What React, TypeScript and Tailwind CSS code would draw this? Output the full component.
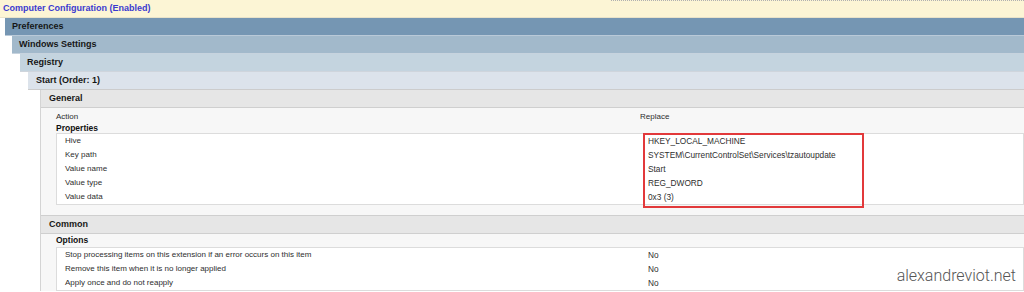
import React from 'react';

const properties = [
  { label: 'Hive', value: 'HKEY_LOCAL_MACHINE' },
  { label: 'Key path', value: 'SYSTEM\\CurrentControlSet\\Services\\tzautoupdate' },
  { label: 'Value name', value: 'Start' },
  { label: 'Value type', value: 'REG_DWORD' },
  { label: 'Value data', value: '0x3 (3)' },
];

const options = [
  { label: 'Stop processing items on this extension if an error occurs on this item', value: 'No' },
  { label: 'Remove this item when it is no longer applied', value: 'No' },
  { label: 'Apply once and do not reapply', value: 'No' },
];

const Row = ({ label, value }: { label: string; value: string }) => (
  <div className="flex h-[14px] items-center">
    <div className="w-[591px] shrink-0 pl-[8px]">{label}</div>
    <div className="text-[8.3px]">{value}</div>
  </div>
);

const App = () => {
  return (
    <div className="relative h-[292px] w-[1024px] overflow-hidden bg-white font-['Liberation_Sans',Arial,sans-serif] text-[8px] text-[#2e2e2e]">
      {/* nested section headers */}
      <div className="h-[18px] border-b border-[#e9e3c9] bg-[#fcf5d5]">
        <div className="ml-[611px] h-px border-t border-dotted border-[#b0b0b0]" />
        <div className="flex h-[16px] items-center pl-[3px] text-[9px] font-bold text-[#3b3bd0]">
          Computer Configuration (Enabled)
        </div>
      </div>
      <div className="ml-[5px] flex h-[18px] items-center border-b border-[#b9c9d8] bg-[#7596b3] pl-[7px] text-[9px] font-bold text-[#161616]">
        Preferences
      </div>
      <div className="ml-[12px] flex h-[18px] items-center border-b border-[#c7d3de] bg-[#a2b9cb] pl-[7px] text-[9px] font-bold text-[#161616]">
        Windows Settings
      </div>
      <div className="ml-[20px] flex h-[18px] items-center border-b border-[#cfd5dc] bg-[#c4d4df] pl-[7px] text-[9px] font-bold text-[#161616]">
        Registry
      </div>
      <div className="ml-[28px] flex h-[18px] items-center border-b border-[#cccccc] bg-[#dce3eb] pl-[8px] text-[9px] font-bold text-[#161616]">
        Start (Order: 1)
      </div>

      <div className="ml-[40px] border-l border-[#d4d4d4] bg-[#f7f7f7]">
        <div className="flex h-[18px] items-center border-b border-[#cfcfcf] bg-[#e6e6e6] pl-[8px] text-[9px] font-bold text-[#161616]">
          General
        </div>
        <div className="pl-[15px] pt-[2px]">
          <div className="flex h-[13px] items-center">
            <div className="w-[584px] shrink-0">Action</div>
            <div>Replace</div>
          </div>
          <div className="flex h-[10px] items-center text-[8.5px] font-bold text-[#111]">Properties</div>
          <div className="relative border border-[#dcdcdc] bg-white">
            {properties.map((p) => (
              <Row key={p.label} label={p.label} value={p.value} />
            ))}
            <div className="absolute left-[586px] top-[-1px] h-[75px] w-[221px] border-2 border-[#e2393b]" />
          </div>
          <div className="h-[10px]" />
        </div>

        <div className="flex h-[19px] items-center border-y border-[#cfcfcf] bg-[#e6e6e6] pl-[8px] text-[9px] font-bold text-[#161616]">
          Common
        </div>
        <div className="pl-[15px]">
          <div className="flex h-[13px] items-center text-[8.5px] font-bold text-[#111]">Options</div>
          <div className="border border-[#dcdcdc] bg-white">
            {options.map((o) => (
              <Row key={o.label} label={o.label} value={o.value} />
            ))}
          </div>
        </div>
      </div>

      <div className="absolute bottom-[4px] right-[8px] font-['Roboto',sans-serif] text-[16px] font-light text-[#555]">
        alexandreviot.net
      </div>
    </div>
  );
};

export default App;
